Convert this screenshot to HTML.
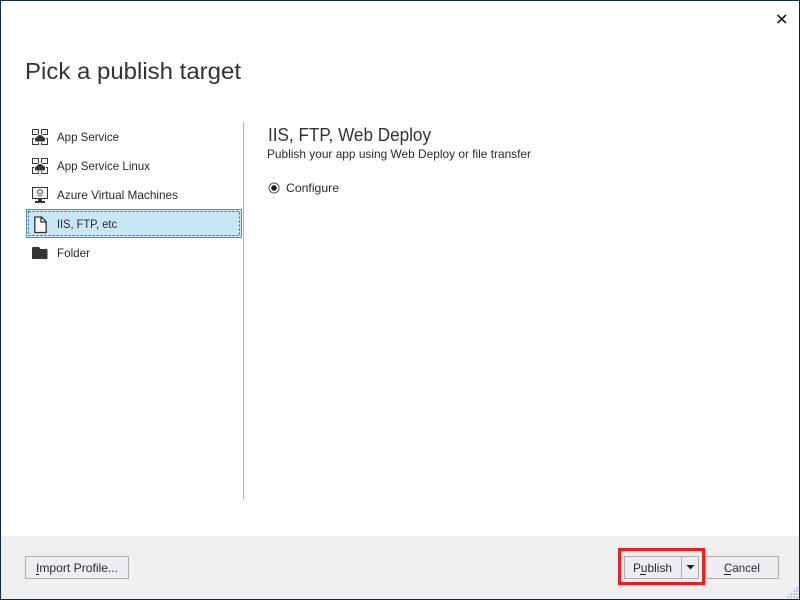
<!DOCTYPE html>
<html>
<head>
<meta charset="utf-8">
<style>
html,body{margin:0;padding:0;background:#fff;width:800px;height:600px;overflow:hidden}
svg{display:block}
text{font-family:"Liberation Sans",sans-serif;fill:#2a2a2a}
</style>
</head>
<body>
<svg width="800" height="600" viewBox="0 0 800 600" xmlns="http://www.w3.org/2000/svg">
<rect width="800" height="600" fill="#fff"/>
<rect x="1" y="536" width="798" height="63" fill="#efefef"/>
<rect x="0.5" y="0.5" width="799" height="599" fill="none" stroke="#0e2a3f"/>

<!-- close -->
<path d="M777.500 15l8.500 8M786 15l-8.500 8" stroke="#1e1e1e" stroke-width="1.600" fill="none"/>

<text x="25" y="79" font-size="23" textLength="216" lengthAdjust="spacingAndGlyphs" style="fill:#333">Pick a publish target</text>

<!-- selection -->
<rect x="26.500" y="209.500" width="215" height="28" fill="#c9e6f5" stroke="#3a9bd0"/>
<rect x="28.500" y="211.500" width="211" height="24" fill="none" stroke="#3f5a68" stroke-dasharray="2 2"/>

<!-- divider -->
<rect x="243" y="122" width="1" height="378" fill="#b4b4b4"/>

<!-- list text -->
<text x="57" y="141" font-size="12" textLength="62" lengthAdjust="spacingAndGlyphs">App Service</text>
<text x="57" y="170" font-size="12" textLength="93" lengthAdjust="spacingAndGlyphs">App Service Linux</text>
<text x="57" y="199" font-size="12" textLength="121" lengthAdjust="spacingAndGlyphs">Azure Virtual Machines</text>
<text x="57" y="228" font-size="12" textLength="60" lengthAdjust="spacingAndGlyphs">IIS, FTP, etc</text>
<text x="57" y="257" font-size="12" textLength="33" lengthAdjust="spacingAndGlyphs">Folder</text>

<!-- app service icons -->
<g fill="#f4f4f4" stroke="#3a3a3a">
<rect x="32.500" y="129.500" width="6" height="5"/><rect x="41.500" y="129.500" width="6" height="5"/>
<rect x="32.500" y="138.500" width="6" height="6"/><rect x="41.500" y="138.500" width="6" height="6"/>
</g>
<path d="M36 141.500c-2-1.800-1-4.300 1-4.300c.8-2.800 5.200-3 6-.2c2.300-.2 3 3 1 4.500z" fill="#333" stroke="#f4f4f4" stroke-width="2" paint-order="stroke"/>
<g fill="#f4f4f4" stroke="#3a3a3a">
<rect x="32.500" y="158.500" width="6" height="5"/><rect x="41.500" y="158.500" width="6" height="5"/>
<rect x="32.500" y="167.500" width="6" height="6"/><rect x="41.500" y="167.500" width="6" height="6"/>
</g>
<path d="M36 170.500c-2-1.800-1-4.300 1-4.300c.8-2.800 5.200-3 6-.2c2.300-.2 3 3 1 4.500z" fill="#333" stroke="#f4f4f4" stroke-width="2" paint-order="stroke"/>

<!-- VM icon -->
<rect x="32.500" y="187.500" width="15" height="11" fill="#f4f4f4" stroke="#333"/>
<rect x="38" y="199" width="4" height="2" fill="#333"/>
<rect x="35" y="201" width="10" height="2" fill="#333"/>
<path d="M40 189.500l2.500 1.500v1.500l-2.500 1.500l-2.500-1.500v-1.500z" fill="none" stroke="#555"/>
<path d="M37.500 195l2.500 1.300l2.500-1.300" fill="none" stroke="#777"/>

<!-- file icon -->
<path d="M34.800 217h6.700l4.700 4.700v10.800h-11.400z" fill="#f6f6f6" stroke="#333" stroke-width="1.300"/>
<path d="M41 217v5h5" fill="none" stroke="#333" stroke-width="1.300"/>

<!-- folder icon -->
<path d="M32 248a1 1 0 0 1 1-1h6l1.500 2h6a1 1 0 0 1 1 1v8a1 1 0 0 1-1 1h-13.500a1 1 0 0 1-1-1z" fill="#333"/>

<!-- right panel -->
<text x="268" y="141" font-size="18" textLength="163" lengthAdjust="spacingAndGlyphs" style="fill:#333">IIS, FTP, Web Deploy</text>
<text x="267" y="158" font-size="12" textLength="264" lengthAdjust="spacingAndGlyphs">Publish your app using Web Deploy or file transfer</text>
<circle cx="274" cy="188" r="5" fill="#fff" stroke="#555"/>
<circle cx="274" cy="188" r="2.800" fill="#1e1e1e"/>
<text x="286" y="192" font-size="12" textLength="53" lengthAdjust="spacingAndGlyphs">Configure</text>

<!-- Import -->
<rect x="25.500" y="556.500" width="103" height="22" fill="#eeeef2" stroke="#adadad"/>
<text x="36" y="572" font-size="12" textLength="82" lengthAdjust="spacingAndGlyphs">Import Profile...</text>
<rect x="36" y="574" width="3" height="1" fill="#1e1e1e"/>

<!-- Publish -->
<rect x="624.500" y="556.500" width="74" height="22" fill="#eeeef2" stroke="#adadad"/>
<rect x="681" y="557" width="1" height="21" fill="#adadad"/>
<text x="633" y="572" font-size="12" textLength="39" lengthAdjust="spacingAndGlyphs">Publish</text>
<rect x="640" y="574" width="6" height="1" fill="#1e1e1e"/>
<path d="M686.500 565h8l-4 4.500z" fill="#1e1e1e"/>

<!-- Cancel -->
<rect x="705.500" y="556.500" width="73" height="22" fill="#eeeef2" stroke="#adadad"/>
<text x="724" y="572" font-size="12" textLength="36" lengthAdjust="spacingAndGlyphs">Cancel</text>
<rect x="724" y="574" width="7" height="1" fill="#1e1e1e"/>

<!-- red highlight -->
<rect x="619.500" y="549.500" width="84" height="34" fill="none" stroke="#ee1c25" stroke-width="3"/>

<!-- grip -->
<g fill="#c4c8da">
<rect x="796" y="587" width="2" height="2"/>
<rect x="796" y="590" width="2" height="2"/><rect x="793" y="590" width="2" height="2"/>
<rect x="796" y="593" width="2" height="2"/><rect x="793" y="593" width="2" height="2"/><rect x="790" y="593" width="2" height="2"/>
<rect x="796" y="596" width="2" height="2"/><rect x="793" y="596" width="2" height="2"/><rect x="790" y="596" width="2" height="2"/><rect x="787" y="596" width="2" height="2"/>
</g>
</svg>
</body>
</html>
